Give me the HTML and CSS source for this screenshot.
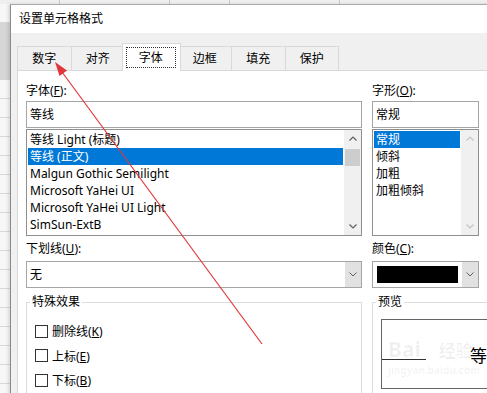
FILE: index.html
```html
<!DOCTYPE html>
<html lang="zh-CN">
<head>
  <meta charset="UTF-8" />
  <title>设置单元格格式</title>
  <link rel="stylesheet" href="styles.css">
</head>
<body>
  <div class="excel-top">
    <span class="seg"></span><span class="seg wide"></span><span class="seg"></span><span class="seg wide"></span>
  </div>

  <div class="screen">
    <div class="excel-rows">
      <div></div><div class="hl"></div><div class="hl"></div><div class="hl"></div>
      <div></div><div></div><div></div><div></div><div></div><div></div>
      <div></div><div></div><div></div><div></div><div></div><div></div>
      <div></div><div></div><div></div><div></div>
    </div>

    <div class="dialog">
      <div class="title-bar">设置单元格格式</div>

      <div class="dialog-body">
        <div class="tabs">
          <div class="tab">数字</div>
          <div class="tab">对齐</div>
          <div class="tab active"><span class="focus">字体</span></div>
          <div class="tab">边框</div>
          <div class="tab">填充</div>
          <div class="tab">保护</div>
        </div>

        <div class="tab-panel">
          <!-- left column: font name, underline, effects -->
          <div class="col col-left">
            <div class="lbl">字体(<u>F</u>):</div>
            <div class="field">等线</div>
            <div class="list">
              <div class="list-items">
                <div class="item">等线 Light (标题)</div>
                <div class="item selected">等线 (正文)</div>
                <div class="item">Malgun Gothic Semilight</div>
                <div class="item">Microsoft YaHei UI</div>
                <div class="item">Microsoft YaHei UI Light</div>
                <div class="item">SimSun-ExtB</div>
              </div>
              <div class="scrollbar">
                <div class="sb-btn">
                  <svg width="8" height="5" viewBox="0 0 8 5"><polyline points="0.5,4.5 4,1 7.5,4.5" fill="none" stroke="#606060" stroke-width="1.2"/></svg>
                </div>
                <div class="sb-track"><div class="sb-thumb"></div></div>
                <div class="sb-btn">
                  <svg width="8" height="5" viewBox="0 0 8 5"><polyline points="0.5,0.5 4,4 7.5,0.5" fill="none" stroke="#606060" stroke-width="1.2"/></svg>
                </div>
              </div>
            </div>

            <div class="lbl lbl-gap">下划线(<u>U</u>):</div>
            <div class="dropdown">
              <div class="dd-text">无</div>
              <div class="dd-btn">
                <svg width="8" height="5" viewBox="0 0 8 5"><polyline points="0.5,0.5 4,4 7.5,0.5" fill="none" stroke="#606060" stroke-width="1"/></svg>
              </div>
            </div>

            <fieldset class="group group-effects">
              <legend>特殊效果</legend>
              <div class="check-row"><span class="checkbox"></span><span>删除线(<u>K</u>)</span></div>
              <div class="check-row"><span class="checkbox"></span><span>上标(<u>E</u>)</span></div>
              <div class="check-row"><span class="checkbox"></span><span>下标(<u>B</u>)</span></div>
            </fieldset>
          </div>

          <!-- right column: font style, colour, preview -->
          <div class="col col-right">
            <div class="lbl">字形(<u>O</u>):</div>
            <div class="field">常规</div>
            <div class="list">
              <div class="list-items">
                <div class="item selected">常规</div>
                <div class="item">倾斜</div>
                <div class="item">加粗</div>
                <div class="item">加粗倾斜</div>
              </div>
              <div class="scrollbar disabled">
                <div class="sb-btn">
                  <svg width="8" height="5" viewBox="0 0 8 5"><polyline points="0.5,4.5 4,1 7.5,4.5" fill="none" stroke="#c4c4c4" stroke-width="1.2"/></svg>
                </div>
                <div class="sb-track"></div>
                <div class="sb-btn">
                  <svg width="8" height="5" viewBox="0 0 8 5"><polyline points="0.5,0.5 4,4 7.5,0.5" fill="none" stroke="#c4c4c4" stroke-width="1.2"/></svg>
                </div>
              </div>
            </div>

            <div class="lbl lbl-gap">颜色(<u>C</u>):</div>
            <div class="dropdown">
              <div class="swatch"></div>
              <div class="dd-btn">
                <svg width="8" height="5" viewBox="0 0 8 5"><polyline points="0.5,0.5 4,4 7.5,0.5" fill="none" stroke="#606060" stroke-width="1"/></svg>
              </div>
            </div>

            <fieldset class="group group-preview">
              <legend>预览</legend>
              <div class="preview-box">
                <div class="baseline"></div>
                <div class="preview-text">等线</div>
              </div>
            </fieldset>
          </div>
        </div>
      </div>
    </div>
  </div>

  <div class="watermark">
    <div class="wm-logo">Bai<span class="wm-cn">经验</span></div>
    <div class="wm-url">jingyan.baidu.com</div>
  </div>

  <svg class="arrow" width="487" height="393" viewBox="0 0 487 393">
    <line x1="262" y1="344" x2="62" y2="72" stroke="#e0383a" stroke-width="1.2"/>
    <polygon points="55,62 67,70.5 59.5,76" fill="#e0383a"/>
  </svg>
</body>
</html>
```

FILE: styles.css
```css
* {
  box-sizing: border-box;
  margin: 0;
  padding: 0;
}

body {
  width: 487px;
  height: 393px;
  overflow: hidden;
  position: relative;
  font-family: "Noto Sans", "Noto Sans CJK SC", sans-serif;
  font-size: 12px;
  color: #000;
  background: #f3f3f3;
}

/* Excel window behind the dialog */
.excel-top {
  height: 4px;
  width: 540px;
  display: flex;
  background: #efefef;
}

.excel-top .seg {
  width: 60px;
  border-right: 1px solid #c8c8c8;
}

.excel-top .seg.wide {
  width: 110px;
}

.screen {
  display: flex;
  width: 540px;
  height: 430px;
}

.excel-rows {
  width: 10px;
  flex-shrink: 0;
  background: #f7f7f7;
}

.excel-rows div {
  height: 19px;
  border-bottom: 1px solid #d8d8d8;
}

.excel-rows .hl {
  background: #d6d6d6;
}

/* Dialog */
.dialog {
  flex: 1;
  display: flex;
  flex-direction: column;
  border-left: 1px solid #8a8a8a;
  border-top: 1px solid #a9a9a9;
  box-shadow: -2px 0 3px rgba(0, 0, 0, 0.12);
}

.title-bar {
  height: 28px;
  line-height: 28px;
  padding-left: 8px;
  background: #fff;
  font-size: 12px;
}

.dialog-body {
  flex: 1;
  display: flex;
  flex-direction: column;
  background: #f0f0f0;
  padding: 10px 0 0 6px;
}

/* Tabs */
.tabs {
  display: flex;
  align-items: flex-end;
  height: 27px;
}

.tab {
  width: 54.5px;
  height: 24px;
  line-height: 24px;
  text-align: center;
  border: 1px solid #d9d9d9;
  border-bottom: none;
  margin-right: -1px;
  background: #f0f0f0;
}

.tab.active {
  position: relative;
  z-index: 1;
  width: 58.5px;
  height: 28px;
  margin: 0 -3px -1px -2px;
  padding: 3px 4px 3px 3px;
  background: #fff;
  display: flex;
}

.tab .focus {
  flex: 1;
  border: 1px dotted #333;
  line-height: 20px;
}

.tab-panel {
  flex: 1;
  display: flex;
  gap: 10px;
  background: #fff;
  border: 1px solid #d9d9d9;
  padding: 12px 8px 0;
}

/* Columns */
.col {
  display: flex;
  flex-direction: column;
  flex-shrink: 0;
}

.col-left {
  width: 336px;
}

.col-right {
  width: 107px;
}

.lbl {
  height: 16px;
  line-height: 16px;
}

.lbl-gap {
  margin-top: 5px;
}

.field {
  height: 27px;
  line-height: 26px;
  margin-top: 2px;
  padding-left: 3px;
  border: 1px solid #a5a5a5;
}

/* List boxes */
.list {
  display: flex;
  height: 107px;
  margin-top: 1px;
  border: 1px solid #8f8f8f;
}

.list-items {
  flex: 1;
  padding: 1px;
  overflow: hidden;
}

.item {
  height: 17px;
  line-height: 17px;
  padding-left: 2px;
  white-space: nowrap;
}

.item.selected {
  background: #0078d7;
  color: #fff;
}

.scrollbar {
  width: 17px;
  display: flex;
  flex-direction: column;
  background: #f0f0f0;
}

.sb-btn {
  height: 17px;
  display: flex;
  align-items: center;
  justify-content: center;
}

.sb-track {
  flex: 1;
  padding: 2px 1px 0;
}

.sb-thumb {
  height: 17px;
  background: #cdcdcd;
}

/* Dropdowns */
.dropdown {
  display: flex;
  height: 27px;
  margin-top: 4px;
  border: 1px solid #a5a5a5;
}

.dd-text {
  flex: 1;
  line-height: 25px;
  padding-left: 3px;
}

.dd-btn {
  width: 16px;
  display: flex;
  align-items: center;
  justify-content: center;
  background: #e1e1e1;
}

.swatch {
  flex: 1;
  margin: 4px;
  background: #000;
}

/* Group boxes */
.group {
  margin-top: 6px;
  height: 120px;
  border: 1px solid #dcdcdc;
  padding: 9px 8px 0;
}

.group legend {
  line-height: 16px;
  padding: 0 2px;
  margin-left: -5px;
}

.group-preview {
  width: 240px;
}

.check-row {
  display: flex;
  align-items: center;
  gap: 4px;
  height: 24.5px;
}

.checkbox {
  width: 13px;
  height: 13px;
  border: 1px solid #333;
  background: #fff;
}

.preview-box {
  width: 300px;
  height: 70px;
  border: 1px solid #646464;
  display: flex;
  align-items: center;
}

.baseline {
  width: 44px;
  height: 1px;
  margin-top: 10px;
  background: #333;
}

.preview-text {
  margin-left: 44px;
  font-size: 17px;
}

/* Overlays on top of the screenshot */
.watermark {
  position: absolute;
  left: 388px;
  top: 336px;
  color: rgba(0, 0, 0, 0.06);
  pointer-events: none;
}

.wm-logo {
  font-size: 21px;
  font-weight: bold;
  line-height: 26px;
}

.wm-cn {
  margin-left: 18px;
  font-size: 17px;
}

.wm-url {
  font-size: 10px;
  line-height: 12px;
  font-weight: bold;
}

.arrow {
  position: absolute;
  left: 0;
  top: 0;
  pointer-events: none;
}
```
